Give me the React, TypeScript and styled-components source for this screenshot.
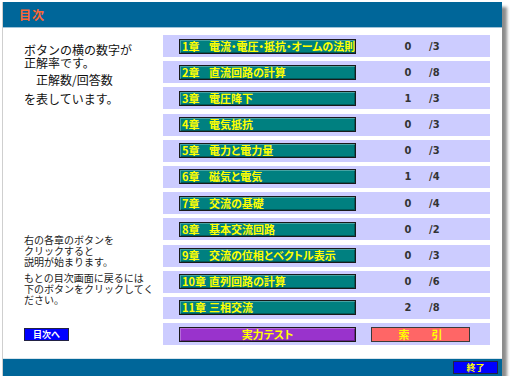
import React from "react";
import styled, { createGlobalStyle } from "styled-components";

const GlobalStyle = createGlobalStyle`
  html, body {
    margin: 0;
    padding: 0;
    background: #ffffff;
  }
  body {
    font-family: "Noto Sans CJK JP", "DejaVu Sans", sans-serif;
  }
`;

const jp = `"Noto Sans CJK JP", "Noto Sans", sans-serif`;
const num = `"Liberation Sans Narrow", "DejaVu Sans Condensed", "DejaVu Sans", sans-serif`;

const Window = styled.div`
  margin: 2px 0 0 2px;
  width: 500px;
  height: 374px;
  box-sizing: border-box;
  display: flex;
  flex-direction: column;
  background: #ffffff;
  border-left: 1px solid #cfcfcf;
  box-shadow: 5px 5px 3px rgba(0, 0, 0, 0.45);
`;

const TitleBar = styled.div`
  height: 26px;
  flex: none;
  display: flex;
  align-items: center;
  padding-left: 16px;
  background: #006699;
  border-bottom: 1px solid #9fc3d9;
  box-sizing: border-box;
`;

const Title = styled.h1`
  margin: 0;
  font-family: ${jp};
  font-size: 12px;
  font-weight: 700;
  letter-spacing: 1px;
  color: #ff6633;
`;

const Body = styled.div`
  flex: 1;
  display: flex;
  padding: 7px 12px 0 21px;
`;

const Side = styled.div`
  width: 139px;
  flex: none;
  display: flex;
  flex-direction: column;
  align-items: flex-start;
  font-family: ${jp};
  color: #111111;
`;

const Lead = styled.p<{ $top: number; $indent?: boolean }>`
  margin: ${(p) => p.$top}px 0 0;
  padding-left: ${(p) => (p.$indent ? 12 : 0)}px;
  font-size: 12px;
  line-height: 13px;
`;

const Note = styled.p<{ $top: number }>`
  margin: ${(p) => p.$top}px 0 0;
  font-size: 10px;
  line-height: 11px;
  color: #222222;
`;

const NavButton = styled.button<{ $color?: string; $top?: number }>`
  all: unset;
  box-sizing: border-box;
  display: flex;
  align-items: center;
  justify-content: center;
  margin-top: ${(p) => p.$top || 0}px;
  width: 45px;
  height: 13px;
  font-family: ${jp};
  font-size: 9px;
  font-weight: 700;
  color: ${(p) => p.$color || "#ffffff"};
  background: #0000ff;
  border: 1px solid #222244;
  cursor: pointer;
`;

const List = styled.div`
  width: 327px;
  display: flex;
  flex-direction: column;
  gap: 4.2px;
`;

const Row = styled.div`
  height: 22px;
  display: flex;
  align-items: center;
  padding-left: 16px;
  background: #ccccff;
`;

const ChapterButton = styled.button<{ $bg: string; $center?: boolean }>`
  all: unset;
  box-sizing: border-box;
  width: 177px;
  height: 15px;
  display: flex;
  align-items: center;
  justify-content: ${(p) => (p.$center ? "center" : "flex-start")};
  padding-left: ${(p) => (p.$center ? 0 : 2)}px;
  font-family: ${jp};
  font-size: 11px;
  font-weight: 700;
  font-feature-settings: "palt";
  line-height: 13px;
  white-space: nowrap;
  overflow: hidden;
  color: #ffff00;
  background: ${(p) => p.$bg};
  border: 1px solid #1a1a1a;
  box-shadow: inset 1px 1px 0 rgba(255, 255, 255, 0.28),
    inset -1px -1px 0 rgba(0, 0, 0, 0.3);
  cursor: pointer;
`;

const ChapterNo = styled.span`
  width: 27px;
  flex: none;
`;

const IndexButton = styled.button`
  all: unset;
  box-sizing: border-box;
  margin-left: 15px;
  width: 99px;
  height: 15px;
  display: flex;
  align-items: center;
  justify-content: center;
  gap: 22px;
  font-family: ${jp};
  font-size: 11px;
  font-weight: 700;
  color: #ffff00;
  background: #ff6666;
  border: 1px solid #3a3a3a;
  cursor: pointer;
`;

const Count = styled.span`
  width: 20px;
  margin-left: 42px;
  text-align: center;
  font-family: ${num};
  font-size: 11px;
  font-weight: 700;
  color: #333333;
`;

const Total = styled.span`
  margin-left: 11px;
  font-family: ${num};
  font-size: 11px;
  font-weight: 700;
  color: #333333;
`;

const BottomBar = styled.div`
  height: 18px;
  flex: none;
  display: flex;
  align-items: center;
  justify-content: flex-end;
  padding-right: 4px;
  background: #006699;
  border-top: 1px solid #d8e4ec;
  box-sizing: border-box;
`;

const chapters = [
  { no: "1章", title: "電流・電圧・抵抗・オームの法則", ok: 0, total: 3 },
  { no: "2章", title: "直流回路の計算", ok: 0, total: 8 },
  { no: "3章", title: "電圧降下", ok: 1, total: 3 },
  { no: "4章", title: "電気抵抗", ok: 0, total: 3 },
  { no: "5章", title: "電力と電力量", ok: 0, total: 3 },
  { no: "6章", title: "磁気と電気", ok: 1, total: 4 },
  { no: "7章", title: "交流の基礎", ok: 0, total: 4 },
  { no: "8章", title: "基本交流回路", ok: 0, total: 2 },
  { no: "9章", title: "交流の位相とベクトル表示", ok: 0, total: 3 },
  { no: "10章", title: "直列回路の計算", ok: 0, total: 6 },
  { no: "11章", title: "三相交流", ok: 2, total: 8 },
];

function App() {
  return (
    <>
      <GlobalStyle />
      <Window>
        <TitleBar>
          <Title>目次</Title>
        </TitleBar>

        <Body>
          <Side>
            <Lead $top={8}>
              ボタンの横の数字が
              <br />
              正解率です。
            </Lead>
            <Lead $top={4} $indent>
              正解数/回答数
            </Lead>
            <Lead $top={6}>を表しています。</Lead>

            <Note $top={129}>
              右の各章のボタンを
              <br />
              クリックすると
              <br />
              説明が始まります。
            </Note>
            <Note $top={5}>
              もとの目次画面に戻るには
              <br />
              下のボタンをクリックしてく
              <br />
              ださい。
            </Note>
            <NavButton $top={23}>目次へ</NavButton>
          </Side>

          <List>
            {chapters.map((c, i) => (
              <Row key={i}>
                <ChapterButton $bg="#008080">
                  <ChapterNo>{c.no}</ChapterNo>
                  {c.title}
                </ChapterButton>
                <Count>{c.ok}</Count>
                <Total>/{c.total}</Total>
              </Row>
            ))}
            <Row>
              <ChapterButton $bg="#9933cc" $center>
                実力テスト
              </ChapterButton>
              <IndexButton>
                <span>索</span>
                <span>引</span>
              </IndexButton>
            </Row>
          </List>
        </Body>

        <BottomBar>
          <NavButton $color="#ffff00">終了</NavButton>
        </BottomBar>
      </Window>
    </>
  );
}

export default App;
